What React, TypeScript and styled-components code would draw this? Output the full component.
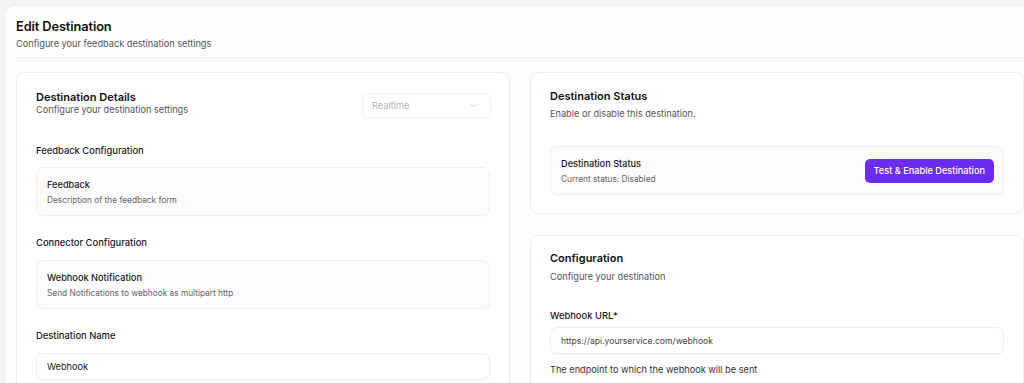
import React from "react";
import styled, { createGlobalStyle } from "styled-components";

const Global = createGlobalStyle`
  html, body { margin: 0; padding: 0; background: #f3f4f6; overflow: hidden; }
  body { font-family: Inter, "Noto Sans", sans-serif; color: #111; }
  * { box-sizing: border-box; }
`;

const Shell = styled.div`
  margin: 5px 0 0 4px;
  width: 1032px;
  height: 378px;
  overflow: hidden;
  background: #fdfdfd;
  border: 1px solid #eeeff1;
  border-bottom: none;
  border-radius: 10px 10px 0 0;
  padding: 12px 12px 0 11px;
`;

const Header = styled.header`
  padding-bottom: 7px;
  border-bottom: 1px solid #efeff1;
`;

const PageTitle = styled.h1`
  margin: 0;
  font-size: 12.8px;
  font-weight: 600;
  letter-spacing: -0.1px;
  line-height: 18px;
`;

const PageSub = styled.p`
  margin: 2px 0 0;
  font-size: 9.2px;
  color: #555;
  line-height: 12px;
`;

const Grid = styled.div`
  display: grid;
  grid-template-columns: 494px 494px;
  column-gap: 20px;
  margin-top: 14px;
`;

const Column = styled.div`
  display: flex;
  flex-direction: column;
  gap: 21px;
`;

const Card = styled.section<{ $pad?: string }>`
  background: #fff;
  border: 1px solid #ececee;
  border-radius: 9px;
  padding: ${(p) => p.$pad || "18px 19px"};
`;

const CardHead = styled.div`
  display: flex;
  justify-content: space-between;
  align-items: flex-start;
`;

const CardTitle = styled.h2`
  margin: 0;
  font-size: 11px;
  font-weight: 600;
  line-height: 14px;
`;

const CardSub = styled.p<{ $gap?: number }>`
  margin: ${(p) => p.$gap ?? 0}px 0 0;
  font-size: 9.2px;
  color: #555;
  line-height: 12px;
`;

const Select = styled.div`
  width: 129px;
  height: 25px;
  margin-top: 3px;
  margin-right: -1px;
  border: 1px solid #f3f3f5;
  border-radius: 6px;
  box-shadow: 0 1px 2px rgba(0, 0, 0, 0.02);
  display: flex;
  align-items: center;
  justify-content: space-between;
  padding: 0 12px 0 9px;
  font-size: 9.2px;
  color: #b4b4b8;
`;

const SectionLabel = styled.div<{ $top: number }>`
  margin-top: ${(p) => p.$top}px;
  font-size: 9.4px;
  font-weight: 500;
  line-height: 12px;
  color: #1a1a1a;
`;

const InfoBox = styled.div<{ $top?: number }>`
  margin-top: ${(p) => p.$top ?? 10}px;
  height: 49px;
  background: #fbfbfb;
  border: 1px solid #f0f0f2;
  border-radius: 7px;
  box-shadow: 0 1px 2px rgba(0, 0, 0, 0.02);
  padding: 0 9px 0 10px;
  display: flex;
  align-items: center;
  justify-content: space-between;
`;

const BoxTitle = styled.div`
  font-size: 9.2px;
  font-weight: 500;
  line-height: 12px;
  color: #1a1a1a;
`;

const BoxSub = styled.div`
  margin-top: 4px;
  font-size: 8.3px;
  line-height: 10px;
  color: #666;
`;

const Input = styled.div<{ $top?: number; $color?: string; $size?: number }>`
  margin-top: ${(p) => p.$top ?? 11}px;
  height: 27px;
  border: 1px solid #efeff1;
  border-radius: 7px;
  background: #fff;
  box-shadow: 0 1px 2px rgba(0, 0, 0, 0.04);
  display: flex;
  align-items: center;
  padding: 0 10px;
  font-size: ${(p) => p.$size ?? 9.2}px;
  color: ${(p) => p.$color || "#1a1a1a"};
`;

const Button = styled.button`
  height: 24px;
  padding: 0 9px;
  border: none;
  border-radius: 5px;
  background: #6c2df3;
  color: #fff;
  font-family: inherit;
  font-size: 9.2px;
  font-weight: 500;
`;

const Help = styled.p`
  margin: 10px 0 0;
  font-size: 9.2px;
  color: #333;
  line-height: 12px;
`;

const Chevron = () => (
  <svg width="9" height="9" viewBox="0 0 24 24" fill="none" stroke="#c4c4c8" strokeWidth="2" strokeLinecap="round" strokeLinejoin="round">
    <path d="m6 9 6 6 6-6" />
  </svg>
);

export default function App() {
  return (
    <>
      <Global />
      <Shell>
        <Header>
          <PageTitle>Edit Destination</PageTitle>
          <PageSub>Configure your feedback destination settings</PageSub>
        </Header>
        <Grid>
          <Card $pad="17px 19px 20px">
            <CardHead>
              <div>
                <CardTitle>Destination Details</CardTitle>
                <CardSub>Configure your destination settings</CardSub>
              </div>
              <Select>
                Realtime
                <Chevron />
              </Select>
            </CardHead>
            <SectionLabel $top={27}>Feedback Configuration</SectionLabel>
            <InfoBox>
              <div>
                <BoxTitle>Feedback</BoxTitle>
                <BoxSub>Description of the feedback form</BoxSub>
              </div>
            </InfoBox>
            <SectionLabel $top={21}>Connector Configuration</SectionLabel>
            <InfoBox $top={11}>
              <div>
                <BoxTitle>Webhook Notification</BoxTitle>
                <BoxSub>Send Notifications to webhook as multipart http</BoxSub>
              </div>
            </InfoBox>
            <SectionLabel $top={21}>Destination Name</SectionLabel>
            <Input>Webhook</Input>
          </Card>
          <Column>
            <Card $pad="16px 19px 18px">
              <CardTitle>Destination Status</CardTitle>
              <CardSub $gap={5}>Enable or disable this destination.</CardSub>
              <InfoBox $top={26}>
                <div>
                  <BoxTitle>Destination Status</BoxTitle>
                  <BoxSub>Current status: Disabled</BoxSub>
                </div>
                <Button>Test &amp; Enable Destination</Button>
              </InfoBox>
            </Card>
            <Card $pad="15px 19px 18px">
              <CardTitle>Configuration</CardTitle>
              <CardSub $gap={6}>Configure your destination</CardSub>
              <SectionLabel $top={27}>Webhook URL*</SectionLabel>
              <Input $top={5} $color="#444" $size={8.6}>https://api.yourservice.com/webhook</Input>
              <Help>The endpoint to which the webhook will be sent</Help>
            </Card>
          </Column>
        </Grid>
      </Shell>
    </>
  );
}
